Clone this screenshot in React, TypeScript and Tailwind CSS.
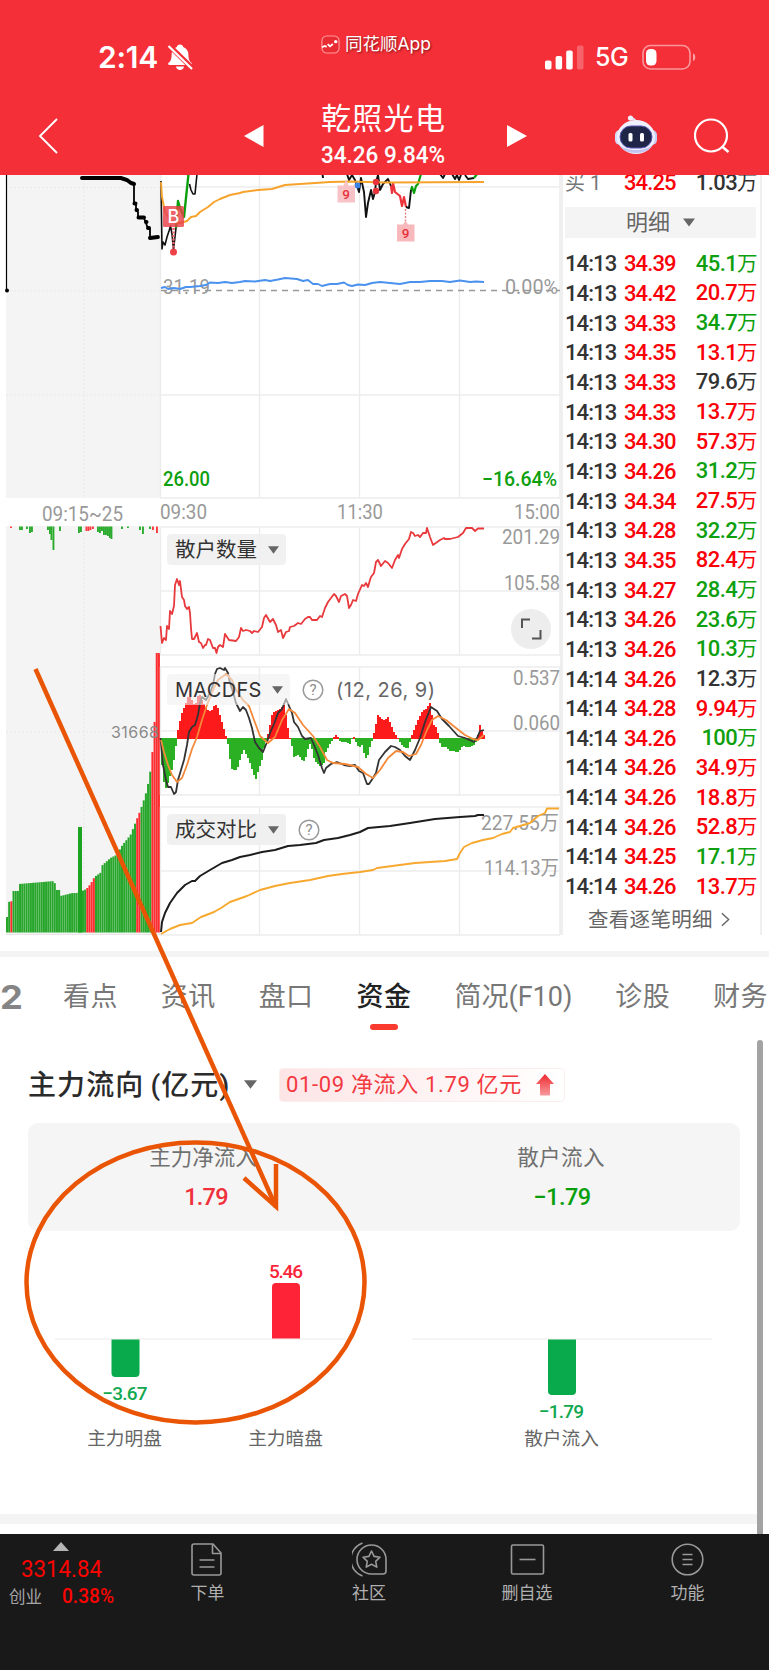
import React from "react";

const SANS = "font-['Roboto','Noto_Sans_CJK_SC',sans-serif]";

type Point = [number, number];

const pts = (s: string): Point[] =>
    s
        .trim()
        .split(/\s+/)
        .map((p) => p.split(",").map(Number) as Point);

const valueAt = (data: Point[], x: number) => {
    for (let i = 1; i < data.length; i++) {
        if (x <= data[i][0]) {
            const [x0, y0] = data[i - 1];
            const [x1, y1] = data[i];
            return y0 + ((y1 - y0) * (x - x0)) / (x1 - x0 || 1);
        }
    }
    return data[data.length - 1][1];
};

const trades = [
    ["14:13", "34.39", "45.1", "g"],
    ["14:13", "34.42", "20.7", "r"],
    ["14:13", "34.33", "34.7", "g"],
    ["14:13", "34.35", "13.1", "r"],
    ["14:13", "34.33", "79.6", "k"],
    ["14:13", "34.33", "13.7", "r"],
    ["14:13", "34.30", "57.3", "r"],
    ["14:13", "34.26", "31.2", "g"],
    ["14:13", "34.34", "27.5", "r"],
    ["14:13", "34.28", "32.2", "g"],
    ["14:13", "34.35", "82.4", "r"],
    ["14:13", "34.27", "28.4", "g"],
    ["14:13", "34.26", "23.6", "g"],
    ["14:13", "34.26", "10.3", "g"],
    ["14:14", "34.26", "12.3", "k"],
    ["14:14", "34.28", "9.94", "r"],
    ["14:14", "34.26", "100", "g"],
    ["14:14", "34.26", "34.9", "r"],
    ["14:14", "34.26", "18.8", "r"],
    ["14:14", "34.26", "52.8", "r"],
    ["14:14", "34.25", "17.1", "g"],
    ["14:14", "34.26", "13.7", "r"],
];

const tones: Record<string, string> = {
    r: "text-[#fb0007]",
    g: "text-[#0d9f0e]",
    k: "text-[#333]",
};

const averageLine =
    "161,182 162,197 165,212 172,222 180,223 187,221 191,217 196,216 200,212 208,207 214,202 220,199 230,195 240,193 243,192 258,190 272,189 285,185 300,184 330,182 350,181.5 385,182.5 484,182";
const indexLine =
    "161,288 165,287 168,289 174,288 180,289 186,287 190,287 200,286 206,285 210,282.5 218,283 225,282 232,283 240,282 245,281 255,281.5 265,280 270,281 278,279.5 285,278 297,279 303,281 308,280 313,284 318,284 322,286 330,284 337,284 344,282.5 348,285 352,286 358,284.5 365,285 372,283 380,282 390,283 400,284 410,282 420,282 430,281 442,281 450,282 460,280.5 470,282 476,281.5 484,282";
const retailLine =
    "160.5,626 162,643 164,638 166,640 167,626 169,629 170,611 172,614 174,606 175,585 177,579 179,585 180,581 182,597 184,600 185,606 187,609 189,607 190,613 191,628 192,639 194,639 197,633 199,642 201,643 203,648 205,645 206,645 208,639 210,640 213,648 215,648 216.5,653 218,647 220,645 223,647 225,634 227,637 229,640 236,641 239,637 241,628 243,631 246,630 250,631 252,633 254,631 258,632 262,627 264,618 266,615 270,622 273,619 276,625 278,632 281,630 283,638 286,632 289,631 290,627 294,626 298,623 301,624 305,619 308,617 310,617 312,620 317,620 320,616 322,617 325,608 328,602 331,598 334,594 336,596 339,602 341,596 345,594 347,596 349,608 351,605 353,600 356,601 358,594 362,585 364,586 366,583 368,587 370,580 371,577 374,573 376,562 378,560 381,566 385,561 388,563 392,568 395,560 398,555 399,558 402,549 405,544 409,539 411,532 413,533 415,536 418,535 420,537 423,533 426,533 427,528 430,537 433,545 440,540 444,538 445,539 450,539 458,537 463,533 466,528 472,528 475,531 478,528.5 484,528.5";
const difLine =
    "160.5,738 163,765 166,780 168,787 171,787 174,794 176,792 178,780 181,770 184,760 187,745 189,732 192,727 195,725 198,715 200,703 202,697 206,700 210,693 213,685 215,674 217,669 220,668 224,670 225,668 228,673 230,683 233,692 236,703 240,711 243,707 246,710 249,718 252,728 255,742 259,748 263,752 267,742 270,733 274,724 278,713 282,709 286,699 289,706 292,713 294,722 298,727 302,736 305,739 311,738 314,745 318,755 322,768 324,773 326,768 331,764 337,762 344,765 350,766 355,765 359,771 363,773 367,784 369,784 373,778 376,773 379,760 385,752 391,746 395,747 400,750 405,756 410,760 415,750 420,738 425,722 431,707 437,711 442,719 449,726 458,736 465,738 474,742 477,738 480,731 484,730";
const deaLine =
    "161,740 164,752 168,765 172,775 177,782 182,778 187,765 192,749 197,737 202,720 207,705 212,692 218,680 226,674 232,680 236,690 243,700 249,706 254,720 260,736 268,743 275,737 282,720 289,709 295,713 303,725 313,736 320,747 327,760 333,763 345,764 358,767 366,774 373,778 380,770 388,758 396,751 403,752 409,756 416,754 421,745 427,730 432,720 438,716 446,720 456,728 465,735 473,739 478,740 484,735";
const histogram = pts(
    "161,748 162,765 163,775 164,782 166,788 169,780 171,772 173,768 175,752 177,739 178,730 181,716 184,708 187,700 190,690 193,705 196,703 199,692 202,700 206,707 209,712 212,710 215,704 218,708 221,718 223,725 225,733 227,738 229,750 231,768 236,770 239,765 241,755 244,750 248,758 251,765 254,775 256,779 259,768 262,760 264,748 267,738.5 269,730 272,715 275,711 278,710 281,709 284,703 286,715 288,728 290,738 292,746 294,757 298,755 301,757 303,763 306,757 309,745 311,742 313,755 316,762 321,766 324,763 326,752 329,745 332,741 334,737 336,735 338,737 340,741 347,742 350,744 352,739 354,737 356,742 359,747 362,745 365,757 367,759 369,750 371,743 373,738 375,728 378,715 381,718 384,720 388,717 391,725 394,732 398,738 401,743 404,747 408,748 411,738 414,730 418,720 422,712 427,708 430,703 432,715 434,725 437,728 439,738 441,747 446,747 449,750 454,751 458,752 463,745 468,747 474,745 477,740 479,730 480,725 482,730 484,735"
);
const sellLine =
    "161,932 162,922 165,913 170,903 177,893 185,885 192,881 195,881 200,876 210,870 222,863 232,860 240,857 250,855 262,852 275,850 288,846 300,845 316,843 324,840 338,838 350,835 360,832 368,828 390,826 410,823 435,819 460,817 475,816 478,815 484,815";
const buyLine =
    "161,934 170,929 180,925 192,923 201,917 214,912 221,908 230,902 247,896 260,890 275,886 290,883 310,880 328,876 342,874 360,872 373,870 377,868 415,863 445,861 457,859 460,853 464,847 472,843 483,840 493,838 502,834 510,832 513,828 520,826 530,823 538,816 545,813 547,808.5 559,808.5";
const auctionVolume = pts(
    "6,917 7.9,917 8,902 11.9,901 12,891 18,891 18.5,884 54,881 55,890 59,890 60,896 72,893 77,893 86,889 90,884 94,877 101,872 102,865 110,858 116,855 122,845 130,835 136,820 140,810 145,795 148,782 150,770 152,751 154,722 155.9,720 156,653 158,653"
);
const auctionTicks = [
    [11, 528, 1], [20, 530, 0], [22, 530, 0], [27, 529, 0], [30, 533, 0], [32, 532, 0], [48, 530, 0],
    [50, 534, 0], [51.5, 540, 0], [53.5, 550, 0], [60, 531, 0], [79, 533, 0], [81, 532, 0],
    [86.5, 531, 1], [88.5, 531, 1], [90.5, 530, 1], [93, 529, 1], [98, 532, 0], [100, 533, 0],
    [102, 531, 0], [104, 535, 0], [106, 535, 0], [108, 536, 0], [110, 538, 0], [111.5, 539, 0],
    [122, 529, 0], [128, 528, 0], [140, 530, 0], [143, 534, 0], [150, 529, 0], [153, 530, 1], [157, 533, 1],
];

type LabelProps = {
    x: number;
    y: number;
    w: number;
    size?: number;
    fill?: string;
    bold?: boolean;
    children: React.ReactNode;
};

const Label = ({ x, y, w, size = 20.5, fill = "#999", bold, children }: LabelProps) => (
    <text
        x={x}
        y={y}
        textLength={w}
        lengthAdjust="spacingAndGlyphs"
        fontSize={size}
        fill={fill}
        fontWeight={bold ? 500 : 400}
    >
        {children}
    </text>
);

const Line = ({ points, color, width = 1.6 }: { points: string; color: string; width?: number }) => (
    <polyline points={points} fill="none" stroke={color} strokeWidth={width} strokeLinejoin="round" />
);

const Grid = ({ top, bottom, rows }: { top: number; bottom: number; rows: number[] }) => (
    <g stroke="#ececec" strokeWidth="1.4">
        {[160.5, 259.5, 359.5, 459.5, 560].map((x) => (
            <line key={x} x1={x} x2={x} y1={top} y2={bottom} />
        ))}
        {rows.map((y) => (
            <line key={y} x1="160" x2="560" y1={y} y2={y} />
        ))}
    </g>
);

const Caret = ({ className = "" }: { className?: string }) => (
    <svg viewBox="0 0 12 8" className={className} fill="#666">
        <path d="M0 0h12L6 8z" />
    </svg>
);

const Help = () => (
    <svg viewBox="0 0 22 22" className="size-[22px] shrink-0">
        <circle cx="11" cy="11" r="9.8" fill="none" stroke="#999" strokeWidth="1.5" />
        <text x="11" y="16" fontSize="15" fill="#8d8d8d" textAnchor="middle">
            ?
        </text>
    </svg>
);

const Header = () => (
    <header className="relative z-10 h-[175px] bg-[#f42f38] text-white shrink-0">
        <div className="h-[88px] flex items-start justify-between pl-[98px] pr-[70px]">
            <div className="flex items-center pt-[39px] w-[222px]">
                <span className="font-['Inter'] font-semibold text-[30px] leading-9 tracking-[-0.2px] w-[69px]">2:14</span>
                <svg viewBox="0 0 26 28" className="w-[26px] h-7" fill="#fff">
                    <path d="M13 1.5c1.8 0 3 1 3.2 2.4 3.4 1.2 5.200 4 5.200 7.600 0 4.800 1 6.600 3 8.300.9.9.5 2.200-.9 2.200H2.500c-1.400 0-1.800-1.300-.9-2.200 2-1.700 3-3.500 3-8.300 0-3.600 1.800-6.400 5.200-7.600C10 2.500 11.200 1.500 13 1.500z" />
                    <path d="M9 23.500h8c-.3 2.200-1.800 3.500-4 3.500s-3.700-1.300-4-3.500z" />
                    <path d="M2.500 3L25.500 25.500" stroke="#f42f38" strokeWidth="5.200" />
                    <path d="M1.500 3L25 26" stroke="#fff" strokeWidth="2.300" />
                </svg>
            </div>
            <div className="flex items-center gap-[5px] pt-[32px] flex-1 pl-px">
                <svg viewBox="0 0 20 20" className="size-[19px]">
                    <rect x="1" y="1" width="18" height="18" rx="5" fill="#e92c34" stroke="#ff9a9c" strokeWidth="1.2" />
                    <path d="M1 13l3-1.500 2 1M7 9.500l2.500 2.500 3-2.500" fill="none" stroke="#fff" strokeWidth="1.800" />
                    <circle cx="15.500" cy="7" r="1.800" fill="#fff" />
                </svg>
                <span className="text-[17.5px] leading-6 font-['Inter','Noto_Sans_CJK_SC',sans-serif] [text-shadow:1px_1px_2px_rgba(60,0,0,0.6)] whitespace-nowrap">
                    同花顺App
                </span>
            </div>
            <div className="flex items-center pt-[43px]">
                <svg viewBox="0 0 40 26" className="w-10 h-[26px]" fill="#fff">
                    <rect x="0" y="16.500" width="6.500" height="9" rx="1.800" />
                    <rect x="10.600" y="12" width="6.500" height="13.500" rx="1.800" />
                    <rect x="21.200" y="6.500" width="6.500" height="19" rx="1.800" />
                    <rect x="32" y="1.500" width="6.500" height="24" rx="1.800" opacity=".25" />
                </svg>
                <span className="font-['Inter'] font-medium text-[25px] leading-[28px] pl-[10px] w-[57px] tracking-[-0.5px]">5G</span>
                <svg viewBox="0 0 56 26" className="w-14 h-[26px] mr-px">
                    <rect x="1" y="1.500" width="47" height="23.500" rx="7.500" fill="none" stroke="#fff" strokeOpacity=".5" strokeWidth="1.600" />
                    <rect x="4" y="5" width="10.500" height="16.500" rx="4.500" fill="#fff" />
                    <path d="M51 9.500c3 .6 3 6.900 0 7.500z" fill="#fff" opacity=".55" />
                </svg>
            </div>
        </div>
        <div className="h-[87px] flex items-center pl-[38px]">
            <svg viewBox="0 0 20 36" className="w-5 h-9 mt-[9px]" fill="none" stroke="#fff" strokeWidth="1.900">
                <path d="M19 1L2 18l17 17" />
            </svg>
            <svg viewBox="0 0 20 22" className="w-5 h-[22px] ml-[186px] mt-[8px]" fill="#fff">
                <path d="M19.500 0v22L0 11z" />
            </svg>
            <div className={`${SANS} w-[126px] ml-[57px] mt-[8px]`}>
                <div className="text-[30px] leading-9 tracking-[1.3px] whitespace-nowrap">乾照光电</div>
                <svg viewBox="0 0 126 30" className="w-[126px] h-[30px] mt-[3px] overflow-visible">
                    <Label x={0} y={23} w={124} size={23} fill="#fff" bold>
                        34.26 9.84%
                    </Label>
                </svg>
            </div>
            <svg viewBox="0 0 20 22" className="w-5 h-[22px] ml-[60px] mt-[8px]" fill="#fff">
                <path d="M0 0v22l20-11z" />
            </svg>
            <svg viewBox="0 0 44 40" className="w-11 h-10 ml-[87px] mt-[6px]">
                <path d="M22 10c0-5-1-6-5-7" fill="none" stroke="#dfe3fa" strokeWidth="2" />
                <circle cx="16.500" cy="3" r="2.600" fill="#eef0ff" />
                <rect x="1" y="15" width="10" height="15" rx="5" fill="#d9dcfa" />
                <rect x="33" y="15" width="10" height="15" rx="5" fill="#c9cdf5" />
                <ellipse cx="22" cy="22" rx="19" ry="17" fill="#eef0fd" />
                <path d="M5 29c4 12 30 12 34 0-6 8-28 8-34 0z" fill="#c3c3f2" />
                <rect x="6" y="11" width="32" height="22" rx="11" fill="#1f2547" stroke="#5b59b8" strokeWidth="1" />
                <rect x="14.500" y="18" width="4" height="8.500" rx="1.500" fill="#fff" />
                <rect x="26" y="18" width="4" height="8.500" rx="1.500" fill="#fff" />
            </svg>
            <svg viewBox="0 0 36 36" className="size-9 ml-[36px] mt-2" fill="none" stroke="#fff" strokeWidth="2.200">
                <circle cx="17" cy="17.500" r="16" />
                <path d="M28 28.500l6.500 5.500" strokeWidth="2.600" />
            </svg>
        </div>
    </header>
);

const AuctionColumn = () => {
    const bars = [];
    for (let x = 6; x < 158; x += 2.17) bars.push(x);
    const isRed = (x: number) => (x > 9.5 && x < 11.5) || (x > 85 && x < 93) || (x > 134.8 && x < 138.5) || x > 151;
    return (
        <div className="w-[160px] flex flex-col">
            <svg viewBox="0 175 160 323" className="w-[160px] h-[323px]">
                <rect x="6" y="175" width="154" height="323" fill="#f4f4f4" />
                <path d="M84 175V498M6 187.500H160M6 291H160M6 395H160" stroke="#e9e9e9" strokeDasharray="2 2" />
                <path d="M6.500 175V291" stroke="#000" strokeWidth="1.200" />
                <circle cx="7" cy="290.500" r="2" />
                <path d="M82 178H121L127 180 131 183 134 184" fill="none" stroke="#000" strokeWidth="4" strokeLinecap="round" />
                <Line points="134,184 134,203 136,204 136,210 138,212 138,217 144,218 147,226 150,229 150,238 158,237" color="#000" width={1.8} />
                <path d="M134.500 203.500h1M136.500 210h.5M138.500 217.500h5.500M146 222h.5M148 228h1M150 238l8-1" stroke="#000" strokeWidth="4" strokeLinecap="round" />
            </svg>
            <svg viewBox="0 498 160 28" className="w-[160px] h-7 overflow-visible">
                <Label x={42} y={520.5} w={81}>
                    09:15~25
                </Label>
            </svg>
            <svg viewBox="0 526 160 410" className="w-[160px] h-[410px] overflow-visible">
                <rect x="6" y="526" width="154" height="409" fill="#f4f4f4" />
                <path d="M84 526V935M6 732H160" stroke="#e9e9e9" strokeDasharray="2 2" />
                {auctionTicks.map(([x, y, red]) => (
                    <rect key={x} x={x - 1} y="526.500" width="1.900" height={y - 526.5} fill={red ? "#fc3a3e" : "#2bab2e"} />
                ))}
                {bars.map((x) => {
                    const top = valueAt(auctionVolume, x + 0.5);
                    return <rect key={x} x={x} y={top} width="2.050" height={932.5 - top} fill={isRed(x) ? "#fc2d30" : "#27a62b"} />;
                })}
                <rect x="78" y="827" width="4" height="105.500" fill="#1da321" />
                <path d="M6 934.500H160" stroke="#e6e6e6" />
                <text x="111" y="738" fontSize="16" fill="#8a8a8a" textLength="48" fontFamily="Inter">
                    31668
                </text>
            </svg>
        </div>
    );
};

const PriceChart = () => (
    <svg viewBox="160 175 402 351" className="w-[402px] h-[351px] overflow-visible">
        <Grid top={175} bottom={498} rows={[187, 395, 498]} />
        <path d="M161 290.500H560" stroke="#999" strokeWidth="1.300" strokeDasharray="6 5" />
        <Label x={163} y={294} w={47}>31.19</Label>
        <Label x={505} y={294} w={53}>0.00%</Label>
        <Line points={indexLine} color="#4a92ee" width={1.9} />
        <Line points="161,181 162,249 163,242 165,245 167,237 169,231 170.5,226 172,234 173.5,250 176,228" color="#111" />
        <Line points="176,228 178,201 180,208 184,217 188.5,174" color="#0aa00d" width={2.4} />
        <Line points="189.5,184 191,190 193,194 195,194 197,174" color="#111" />
        <Line points="322.500,174 323,178" color="#111" width={2} />
        <Line points="347,174 349,180 352,175 355,180 359,192 361,178 364,192 366,217 368,203 371,190 373,199 375,192 376,182 378,175 380,190 383,184 385,182 388,179 391,186" color="#111" width={1.9} />
        <Line points="391,186 392,193 393,183 395,192 400,196 402,206 404,197 406,207" color="#ee3338" width={2.2} />
        <Line points="406,207 409,208 410,199 411,190" color="#111" width={1.9} />
        <Line points="411,190 412,187 414,193 416,186 418,184 421,174" color="#0aa00d" width={2.2} />
        <Line points="440,174 443,178 445,174 452,174 455,179 457,175 459,180 461,175" color="#111" width={1.9} />
        <Line points="465,175 468,179 474,178" color="#111" width={1.9} />
        <Line points="474,178 477,174" color="#0aa00d" width={2.2} />
        <Line points={averageLine} color="#f7a32b" width={1.9} />
        <rect x="163" y="206" width="21" height="21" rx="1.500" fill="#ea4048" fillOpacity=".82" />
        <text x="173.500" y="223" fontSize="18" fill="#fff" textAnchor="middle" fontFamily="Inter" fontWeight="500">
            B
        </text>
        <path d="M173.500 228V250" stroke="#ee6468" strokeWidth="2.400" strokeDasharray="2 1.500" />
        <circle cx="173.500" cy="252" r="3.500" fill="#ee4249" />
        <circle cx="357.500" cy="185.500" r="3" fill="#3b82e6" />
        <circle cx="376" cy="182" r="3.200" fill="#e8333a" />
        <circle cx="376" cy="191" r="3.200" fill="#e8333a" />
        <path d="M337.500 185.500h6l2.500-6 2.500 6h6.500v17h-17.500z" fill="#f8c3c6" />
        <text x="346" y="198.500" fontSize="13.500" fontWeight="500" fill="#e8333a" textAnchor="middle">9</text>
        <path d="M405.500 209V222" stroke="#e87c80" strokeWidth="1.300" strokeDasharray="2 1.500" />
        <path d="M397 224.500h6l2.500-4 2.500 4h6.500v17H397z" fill="#f8b9bd" />
        <text x="405.500" y="238" fontSize="13.500" fontWeight="500" fill="#e8333a" textAnchor="middle">9</text>
        <Label x={163} y={485.5} w={47} fill="#0d9f0e" bold>26.00</Label>
        <Label x={482} y={485.5} w={75} fill="#0d9f0e" bold>−16.64%</Label>
        <Label x={160} y={519} w={47}>09:30</Label>
        <Label x={337} y={519} w={46}>11:30</Label>
        <Label x={514} y={519} w={46}>15:00</Label>
    </svg>
);

const RetailChart = () => (
    <div className="relative h-[140px]">
        <svg viewBox="160 526 402 140" className="w-[402px] h-[140px] overflow-visible">
            <Grid top={527} bottom={655} rows={[527, 591, 655]} />
            <Line points={retailLine} color="#e8393d" width={1.8} />
            <Label x={502} y={544} w={58}>201.29</Label>
            <Label x={504} y={589.5} w={56}>105.58</Label>
            <circle cx="531" cy="629" r="20" fill="#ededed" />
            <path d="M522 628V619.500H530M532 638.500H540.500V630" fill="none" stroke="#555" strokeWidth="2" />
        </svg>
        <div className="absolute left-[7px] top-2 w-[119px] h-[31px] bg-[#f0f0f0]/90 rounded-sm flex items-center pl-[8px] pt-px text-[20.5px] text-[#333]">
            散户数量
            <Caret className="w-[11px] h-2 ml-[11px]" />
        </div>
    </div>
);

const MacdChart = () => {
    const bars = [];
    for (let x = 161; x < 484; x += 2) bars.push(x);
    return (
        <div className="relative h-[140px]">
            <svg viewBox="160 666 402 140" className="w-[402px] h-[140px] overflow-visible">
                <Grid top={667} bottom={795} rows={[667, 731, 795]} />
                {bars.map((x) => {
                    const y = valueAt(histogram, x + 1);
                    return (
                        <rect
                            key={x}
                            x={x}
                            y={y < 738.5 ? y : 738}
                            width="2"
                            height={Math.abs(y - 738.5) + 0.8}
                            fill={y < 738.5 ? "#fc1a1a" : "#2cb023"}
                            shapeRendering="crispEdges"
                        />
                    );
                })}
                <Line points={difLine} color="#333" width={1.8} />
                <Line points={deaLine} color="#f5893a" width={1.8} />
                <Label x={513} y={684.5} w={47}>0.537</Label>
                <Label x={513} y={729.5} w={47}>0.060</Label>
            </svg>
            <div className="absolute left-[7px] top-2 flex items-center h-[31px]">
                <div className="w-[123px] h-full bg-[#f0f0f0]/60 rounded-sm flex items-center pl-[8px] text-[#333]">
                    <span className="font-['Inter'] text-[20px] tracking-[0.3px] w-[88px]">MACDFS</span>
                    <Caret className="w-[11px] h-2 ml-[9px]" />
                </div>
                <div className="flex items-center pl-[12px]">
                    <Help />
                    <span className="font-['Inter'] text-[20px] text-[#666] pl-[12px] tracking-[0.5px] whitespace-nowrap">(12, 26, 9)</span>
                </div>
            </div>
        </div>
    );
};

const CompareChart = () => (
    <div className="relative h-[130px]">
        <svg viewBox="160 806 402 130" className="w-[402px] h-[130px] overflow-visible">
            <Grid top={807} bottom={935} rows={[807, 871, 935]} />
            <Label x={481} y={829.5} w={78}>227.55万</Label>
            <Label x={484} y={875} w={75}>114.13万</Label>
            <Line points={sellLine} color="#1d1d1d" width={2} />
            <Line points={buyLine} color="#f7a82f" width={1.9} />
        </svg>
        <div className="absolute left-[7px] top-2 flex items-center h-[31px]">
            <div className="w-[119px] h-full bg-[#f0f0f0] rounded-sm flex items-center pl-[8px] pt-px text-[20.5px] text-[#333]">
                成交对比
                <Caret className="w-[11px] h-2 ml-[11px]" />
            </div>
            <div className="pl-3">
                <Help />
            </div>
        </div>
    </div>
);

const TradeList = () => (
    <aside className="w-[202px] h-[760px] border-l-[3px] border-r-2 border-[#efefef] pl-[2px] pr-[3px] text-[22px] font-medium -ml-[2px]">
        {/* the list is scrolled, its first row slides under the header */}
        <div className="flex items-center h-[30px] -mt-[7px] leading-[30px]">
            <span className="w-[59px] text-[20px] font-normal text-[#777]">买 1</span>
            <span className="w-[62px] tracking-[-0.9px] text-[#fb0007]">34.25</span>
            <span className="flex-1 text-right tracking-[-0.6px] text-[#333] whitespace-nowrap">
                1.03<span className="text-[20.5px] font-normal">万</span>
            </span>
        </div>
        <div className="mt-[9px] mr-px h-[31px] bg-[#f4f4f4] flex items-center justify-center gap-[13px] text-[22px] font-normal text-[#666]">
            明细
            <Caret className="w-3 h-[9px]" />
        </div>
        <div className="mt-[11px]">
            {trades.map(([time, price, vol, tone], index) => (
                <div key={index} className="flex items-center h-[29.67px] leading-[29px]">
                    <span className="w-[59px] tracking-[-0.9px] text-[#333]">{time}</span>
                    <span className="w-[62px] tracking-[-0.9px] text-[#fb0007]">{price}</span>
                    <span className={`flex-1 text-right tracking-[-0.6px] whitespace-nowrap ${tones[tone]}`}>
                        {vol}
                        <span className="text-[20.5px] font-normal">万</span>
                    </span>
                </div>
            ))}
        </div>
        <div className="flex items-center pl-[23px] h-9 pt-px text-[20.5px] font-normal text-[#666] whitespace-nowrap tracking-[0.3px]">
            查看逐笔明细
            <svg viewBox="0 0 10 16" className="w-[9px] h-[15px] ml-2" fill="none" stroke="#666" strokeWidth="1.600">
                <path d="M1 1l7.500 7L1 15" />
            </svg>
        </div>
    </aside>
);

const tabs = ["看点", "资讯", "盘口", "资金", "简况(F10)", "诊股", "财务"];

const Tabs = () => (
    <nav className="h-[83px] flex overflow-hidden pt-[20px] text-[27px] leading-10 text-[#777]">
        <div className="w-[63px] shrink-0">
            <span className="inline-block origin-left scale-x-110 font-['Inter'] font-bold text-[33px] text-[#858585]">2</span>
        </div>
        <div className="flex gap-[43px] shrink-0">
            {tabs.map((tab) => (
                <div key={tab} className="flex flex-col items-center whitespace-nowrap">
                    <span className={tab === "资金" ? "text-[#222] font-medium tracking-[0.5px]" : tab === "简况(F10)" ? "tracking-[0px]" : "tracking-[0.4px]"}>
                        {tab}
                    </span>
                    {tab === "资金" && <span className="w-7 h-[6px] mt-[7px] rounded-full bg-[#fb3b30]" />}
                </div>
            ))}
        </div>
    </nav>
);

const CapitalFlow = () => (
    <section className="flex-1 pl-7">
        <div className="flex items-center pt-[28px] h-[61px]">
            <h2 className="text-[28px] font-medium text-[#2b2b2b] tracking-[1.1px] whitespace-nowrap w-[216px] flex">
                <span className="pt-[2px]">主力流向</span>
                <span className="pl-[6px] pt-[2px] tracking-[1.1px]">(亿元)</span>
            </h2>
            <Caret className="w-[13px] h-[9px]" />
            <div className="ml-[22px] w-[286px] h-[34px] rounded-sm border border-[#fdeeee] bg-linear-to-r from-[#fde5e6] to-white flex items-center pl-[6px] text-[22px] text-[#f2393f] whitespace-nowrap">
                <span className="w-[250px] tracking-[0.65px]">01-09 净流入 1.79 亿元</span>
                <svg viewBox="0 0 18 22" className="w-[18px] h-[22px]">
                    <defs>
                        <linearGradient id="up" x1="0" y1="0" x2="0" y2="1">
                            <stop offset="0" stopColor="#ee2a30" />
                            <stop offset="1" stopColor="#f79a9c" />
                        </linearGradient>
                    </defs>
                    <path d="M9 0l9 10h-4v10.500c0 .8-.6 1-1 1H5c-.6 0-1-.4-1-1V10H0z" fill="url(#up)" />
                </svg>
            </div>
        </div>
        <div className="mt-[22px] w-[712px] h-[108px] rounded-[10px] bg-[#f5f5f5] flex text-center">
            <div className="w-[356px] pt-[19px]">
                <div className="text-[21.5px] leading-8 text-[#707070] -ml-[6px]">主力净流入</div>
                <div className="text-[23.5px] leading-8 mt-[7px] font-medium text-[#f0303a] tracking-[-0.8px]">1.79</div>
            </div>
            <div className="w-[356px] pt-[19px]">
                <div className="text-[21.5px] leading-8 text-[#707070] -ml-[2px] tracking-[0.4px]">散户流入</div>
                <div className="text-[23.5px] leading-8 mt-[7px] font-medium text-[#099f0c] tracking-[-0.5px]">−1.79</div>
            </div>
        </div>
        <svg viewBox="28 1231 712 229" className="w-[712px] h-[229px]" textAnchor="middle">
            <path d="M55 1339H346M412 1339H712" stroke="#f2f2f2" strokeWidth="1.500" />
            <path d="M111.500 1339.500h28V1373q0 4-4 4h-20q-4 0-4-4z" fill="#08aa4b" />
            <path d="M272 1338.500V1287q0-4 4-4h20q4 0 4 4v51.500z" fill="#ff2337" />
            <path d="M548 1339.500h28V1391q0 4-4 4h-20q-4 0-4-4z" fill="#08aa4b" />
            <g fontSize="19" fontWeight="500">
                <text x="286" y="1278" fill="#fb2538" textLength="34">5.46</text>
                <text x="125" y="1400" fill="#12a850" textLength="45">−3.67</text>
                <text x="561.500" y="1418" fill="#12a850" textLength="45">−1.79</text>
            </g>
            <g fontSize="18.700" fill="#666">
                <text x="124.500" y="1445">主力明盘</text>
                <text x="285.500" y="1445">主力暗盘</text>
                <text x="561.500" y="1445">散户流入</text>
            </g>
        </svg>
    </section>
);

const navItems = [
    {
        name: "下单",
        width: "w-[167px]",
        icon: (
            <>
                <path d="M4 2h19l8 9v20q0 2-2 2H4q-2 0-2-2V4q0-2 2-2z" />
                <path d="M22.500 2v9.500H31M9.500 18h15M9.500 25h15" />
            </>
        ),
    },
    {
        name: "社区",
        width: "w-[156px]",
        icon: (
            <>
                <path d="M19.500 3a14.500 14.500 0 0 1 14.500 14.500V29q0 3-3 3H19.500a14.500 14.500 0 0 1 0-29z" />
                <path d="M10.500 1a17.500 17.500 0 0 0 0 33" />
                <path d="M19.500 9l2.600 5.400 5.900.8-4.300 4.100 1.100 5.800-5.300-2.800-5.300 2.800 1.100-5.800-4.300-4.100 5.900-.8z" />
            </>
        ),
    },
    {
        name: "删自选",
        width: "w-[160px]",
        icon: (
            <>
                <rect x="1.500" y="3" width="32" height="29" rx="1.500" />
                <path d="M9.500 17.500h16" />
            </>
        ),
    },
    {
        name: "功能",
        width: "w-[161px]",
        icon: (
            <>
                <circle cx="17.500" cy="17.500" r="15.300" />
                <path d="M12.500 12.500h10M12.500 17.500h10M12.500 22.500h10" />
            </>
        ),
    },
];

const BottomNav = () => (
    <footer className="h-[136px] bg-[#191919] flex shrink-0">
        <div className="w-[124px] flex flex-col pt-2">
            <svg viewBox="0 0 16 9" className="w-4 h-[9px] ml-[53px]" fill="#b5b5b5">
                <path d="M8 0l8 9H0z" />
            </svg>
            <svg viewBox="0 1551 124 60" className="w-[124px] h-[60px] overflow-visible">
                <Label x={21} y={1577} w={81} size={24} fill="#fb0400">3314.84</Label>
                <Label x={9} y={1603} w={33} size={17} fill="#a5a5a5">创业</Label>
                <Label x={62} y={1602.5} w={52} size={20} fill="#fb0400" bold>0.38%</Label>
            </svg>
        </div>
        {navItems.map((item) => (
            <div key={item.name} className={`${item.width} flex flex-col items-center pt-2`}>
                <svg viewBox="0 0 35 35" className="size-[35px]" fill="none" stroke="#999" strokeWidth="1.600" strokeLinejoin="round">
                    {item.icon}
                </svg>
                <span className="text-[17px] leading-6 mt-1 text-[#b0b0b0]">{item.name}</span>
            </div>
        ))}
    </footer>
);

const App = () => {
    return (
        <div className={`relative w-[769px] h-[1670px] bg-white flex flex-col overflow-hidden ${SANS}`}>
            <Header />
            <main className="flex h-[761px] shrink-0">
                <AuctionColumn />
                <div className="w-[402px] flex flex-col">
                    <PriceChart />
                    <RetailChart />
                    <MacdChart />
                    <CompareChart />
                </div>
                <TradeList />
            </main>
            <div className="mt-[15px] h-[6px] bg-[#f4f4f4] shrink-0" />
            <Tabs />
            <div className="flex h-[494px] shrink-0">
                <div className="flex flex-col flex-1">
                    <CapitalFlow />
                    <div className="h-[10px] mb-[10px] bg-[#f4f4f4]" />
                </div>
                <div className="w-[6px] mr-[6px] rounded-t-full bg-[#a3a3a3]" />
            </div>
            <BottomNav />
            {/* hand-drawn marker over the page */}
            <svg
                viewBox="0 0 769 1670"
                className="absolute inset-0 w-full h-full pointer-events-none"
                fill="none"
                stroke="#e95504"
                strokeWidth="4.500"
            >
                <ellipse cx="195.500" cy="1282.500" rx="169" ry="140" />
                <path d="M35.500 669L276 1207" />
                <path d="M244 1178l32 28.500V1164" />
            </svg>
        </div>
    );
};

export default App;
